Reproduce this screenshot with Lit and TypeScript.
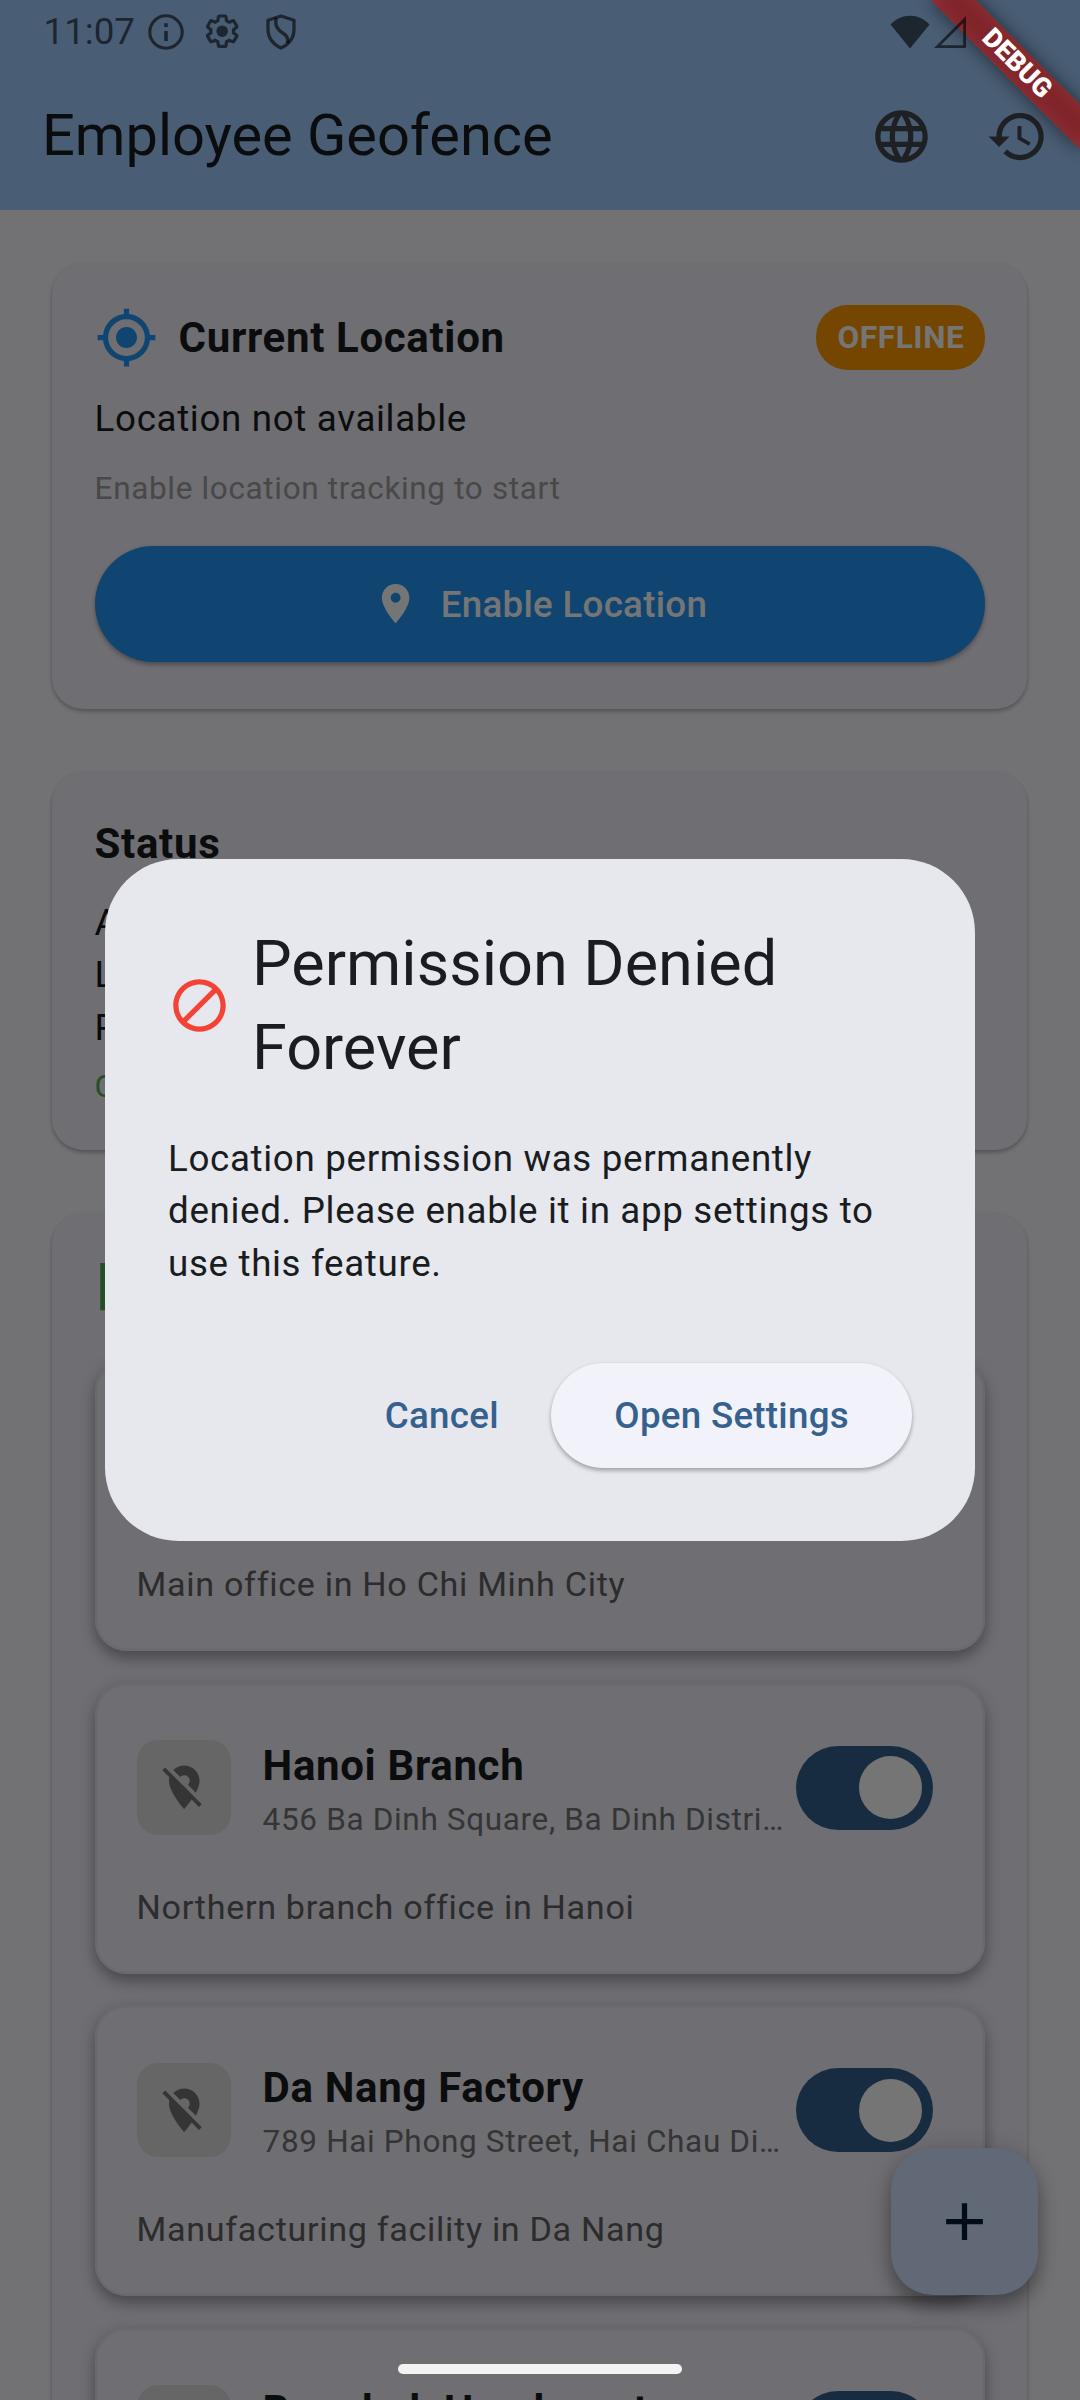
import { LitElement, html, css, svg } from "lit";
import { customElement, property } from "lit/decorators.js";

const ICONS = {
  globe:
    "M11.99 2C6.47 2 2 6.48 2 12s4.47 10 9.99 10C17.52 22 22 17.52 22 12S17.52 2 11.99 2zm6.93 6h-2.95c-.32-1.25-.78-2.45-1.38-3.56 1.84.63 3.37 1.91 4.33 3.56zM12 4.04c.83 1.2 1.48 2.53 1.91 3.96h-3.82c.43-1.43 1.08-2.76 1.91-3.96zM4.26 14C4.1 13.36 4 12.69 4 12s.1-1.36.26-2h3.38c-.08.66-.14 1.32-.14 2 0 .68.06 1.34.14 2H4.26zm.82 2h2.95c.32 1.25.78 2.45 1.38 3.56-1.84-.63-3.37-1.9-4.33-3.56zm2.95-8H5.08c.96-1.66 2.49-2.93 4.33-3.56C8.81 5.55 8.35 6.75 8.03 8zM12 19.96c-.83-1.2-1.48-2.53-1.91-3.96h3.82c-.43 1.43-1.08 2.76-1.91 3.96zM14.34 14H9.66c-.09-.66-.16-1.32-.16-2 0-.68.07-1.35.16-2h4.68c.09.65.16 1.32.16 2 0 .68-.07 1.34-.16 2zm.25 5.56c.6-1.11 1.06-2.31 1.38-3.56h2.95c-.96 1.65-2.49 2.93-4.33 3.56zM16.36 14c.08-.66.14-1.32.14-2 0-.68-.06-1.34-.14-2h3.38c.16.64.26 1.31.26 2s-.1 1.36-.26 2h-3.38z",
  history:
    "M13 3c-4.97 0-9 4.03-9 9H1l3.89 3.89.07.14L9 12H6c0-3.87 3.13-7 7-7s7 3.13 7 7-3.13 7-7 7c-1.93 0-3.68-.79-4.94-2.06l-1.42 1.42C8.27 19.99 10.51 21 13 21c4.97 0 9-4.03 9-9s-4.03-9-9-9zm-1 5v5l4.28 2.54.72-1.21-3.5-2.08V8H12z",
  locate:
    "M12 8c-2.21 0-4 1.79-4 4s1.79 4 4 4 4-1.79 4-4-1.79-4-4-4zm8.94 3c-.46-4.17-3.77-7.48-7.94-7.94V1h-2v2.06C6.83 3.52 3.52 6.83 3.06 11H1v2h2.06c.46 4.17 3.77 7.48 7.94 7.94V23h2v-2.06c4.17-.46 7.48-3.77 7.94-7.94H23v-2h-2.06zM12 19c-3.87 0-7-3.13-7-7s3.13-7 7-7 7 3.13 7 7-3.13 7-7 7z",
  pin: "M12 2C8.13 2 5 5.13 5 9c0 5.25 7 13 7 13s7-7.75 7-13c0-3.87-3.13-7-7-7zm0 9.5c-1.38 0-2.5-1.12-2.5-2.5s1.12-2.5 2.5-2.5 2.5 1.12 2.5 2.5-1.12 2.5-2.5 2.5z",
  pinOff:
    "M12 6.5c1.38 0 2.5 1.12 2.5 2.5 0 .74-.33 1.39-.83 1.85l3.63 3.63c.98-1.86 1.7-3.8 1.7-5.48 0-3.87-3.13-7-7-7-1.98 0-3.76.83-5.04 2.15l3.19 3.19c.46-.52 1.11-.84 1.85-.84zm4.37 9.6l-4.63-4.63-.11-.11L3.27 3 2 4.27l3.18 3.18C5.07 7.95 5 8.47 5 9c0 5.25 7 13 7 13s1.67-1.85 3.38-4.35L18.73 21 20 19.73l-3.63-3.63z",
  block:
    "M12 2C6.48 2 2 6.48 2 12s4.48 10 10 10 10-4.48 10-10S17.52 2 12 2zM4 12c0-4.42 3.58-8 8-8 1.85 0 3.55.63 4.9 1.69L5.69 16.9C4.63 15.55 4 13.85 4 12zm8 8c-1.85 0-3.55-.63-4.9-1.69L18.31 7.1C19.37 8.45 20 10.15 20 12c0 4.42-3.58 8-8 8z",
  business:
    "M12 7V3H2v18h20V7H12zM6 19H4v-2h2v2zm0-4H4v-2h2v2zm0-4H4V9h2v2zm0-4H4V5h2v2zm4 12H8v-2h2v2zm0-4H8v-2h2v2zm0-4H8V9h2v2zm0-4H8V5h2v2zm10 12h-8v-2h2v-2h-2v-2h2v-2h-2V9h8v10z",
  add: "M19 13h-6v6h-2v-6H5v-2h6V5h2v6h6v2z",
  gear: "M19.43 12.98c.04-.32.07-.64.07-.98s-.03-.66-.07-.98l2.11-1.65c.19-.15.24-.42.12-.64l-2-3.46c-.09-.16-.26-.25-.44-.25-.06 0-.12.01-.17.03l-2.49 1c-.52-.4-1.08-.73-1.69-.98l-.38-2.65C14.46 2.18 14.25 2 14 2h-4c-.25 0-.46.18-.49.42l-.38 2.65c-.61.25-1.17.59-1.69.98l-2.49-1c-.06-.02-.12-.03-.18-.03-.17 0-.34.09-.43.25l-2 3.46c-.13.22-.07.49.12.64l2.11 1.65c-.04.32-.07.65-.07.98s.03.66.07.98l-2.11 1.65c-.19.15-.24.42-.12.64l2 3.46c.09.16.26.25.44.25.06 0 .12-.01.17-.03l2.49-1c.52.4 1.08.73 1.69.98l.38 2.65c.03.24.24.42.49.42h4c.25 0 .46-.18.49-.42l.38-2.65c.61-.25 1.17-.59 1.69-.98l2.49 1c.06.02.12.03.18.03.17 0 .34-.09.43-.25l2-3.46c.12-.22.07-.49-.12-.64l-2.11-1.65z",
};

const icon = (name: keyof typeof ICONS, cls = "") =>
  html`<svg class="icon ${cls}" viewBox="0 0 24 24" aria-hidden="true">
    ${svg`<path d=${ICONS[name]}></path>`}
  </svg>`;

interface Office {
  name: string;
  address: string;
  description: string;
}

const OFFICES: Office[] = [
  {
    name: "Head Office",
    address: "123 Nguyen Hue Street, District 1, Ho Chi Minh City",
    description: "Main office in Ho Chi Minh City",
  },
  {
    name: "Hanoi Branch",
    address: "456 Ba Dinh Square, Ba Dinh District, Hanoi",
    description: "Northern branch office in Hanoi",
  },
  {
    name: "Da Nang Factory",
    address: "789 Hai Phong Street, Hai Chau District, Da Nang",
    description: "Manufacturing facility in Da Nang",
  },
  {
    name: "Bangkok Headquarters",
    address: "321 Sukhumvit Road, Watthana, Bangkok",
    description: "Regional office in Bangkok",
  },
];

@customElement("office-card")
export class OfficeCard extends LitElement {
  @property({ attribute: false }) office!: Office;

  static styles = css`
    :host {
      display: block;
      box-sizing: border-box;
      height: 291px;
      padding: 42px;
      border-radius: 31.5px;
      background: #f2effa;
      box-shadow: inset 0 0 0 2.4px #e4e6e9, 0 8px 14px rgba(0, 0, 0, 0.26),
        0 3px 18px rgba(0, 0, 0, 0.12);
    }
    .row {
      display: flex;
      align-items: center;
      height: 126px;
    }
    .tile {
      display: grid;
      place-items: center;
      flex: none;
      width: 94.5px;
      height: 94.5px;
      border-radius: 21px;
      background: #dedede;
    }
    .icon {
      display: block;
      width: 52.5px;
      height: 52.5px;
      fill: #757575;
    }
    .text {
      flex: 1;
      min-width: 0;
      margin-left: 31.5px;
    }
    .name {
      font-size: 42px;
      font-weight: 700;
      line-height: 63px;
      letter-spacing: 0.656px;
      white-space: nowrap;
    }
    .address {
      overflow: hidden;
      font-size: 31.5px;
      line-height: 45px;
      letter-spacing: 0.656px;
      color: #757575;
      white-space: nowrap;
      text-overflow: ellipsis;
    }
    .switch {
      display: flex;
      flex: none;
      justify-content: flex-end;
      box-sizing: border-box;
      width: 136.5px;
      height: 84px;
      margin: 0 10.5px;
      padding: 10.5px;
      border-radius: 42px;
      background: #36618e;
    }
    .thumb {
      width: 63px;
      height: 63px;
      border-radius: 50%;
      background: #fff;
    }
    .description {
      margin-top: 32px;
      font-size: 34.125px;
      line-height: 48.75px;
      letter-spacing: 0.69px;
      color: #616161;
    }
  `;

  render() {
    return html`
      <div class="row">
        <div class="tile">${icon("pinOff")}</div>
        <div class="text">
          <div class="name">${this.office.name}</div>
          <div class="address">${this.office.address}</div>
        </div>
        <div class="switch" role="switch" aria-checked="true"><div class="thumb"></div></div>
      </div>
      <div class="description">${this.office.description}</div>
    `;
  }
}

@customElement("app-root")
export class AppRoot extends LitElement {
  static styles = css`
    :host {
      display: block;
      position: relative;
      width: 1080px;
      height: 2400px;
      overflow: hidden;
      background: #f8f9fd;
      color: #191c20;
      font-family: Roboto, "Liberation Sans", sans-serif;
      font-size: 36.75px;
      line-height: 52.5px;
      letter-spacing: 0.656px;
    }
    .icon {
      display: block;
      flex: none;
      width: 63px;
      height: 63px;
      fill: currentColor;
    }
    .appbar {
      display: flex;
      align-items: center;
      box-sizing: border-box;
      height: 210px;
      padding: 63px 31px 0 42px;
      background: #a0cafd;
    }
    .title {
      flex: 1;
      margin: 0 0 2px;
      font-size: 57.75px;
      font-weight: 400;
      line-height: 73.5px;
      letter-spacing: 0;
    }
    .actions {
      display: flex;
      gap: 53px;
      color: #43474e;
    }
    .content {
      display: flex;
      flex-direction: column;
      gap: 62.5px;
      padding: 52.5px 53px 52.5px 52px;
    }
    .card {
      box-sizing: border-box;
      padding: 42px 42px 42px 42.6px;
      border-radius: 31.5px;
      background: #f2effa;
      box-shadow: 0 3px 4px rgba(0, 0, 0, 0.2), 0 1px 4px rgba(0, 0, 0, 0.1);
    }
    .location {
      height: 446.5px;
    }
    .status {
      height: 378.5px;
      padding-top: 40px;
    }
    .location-head {
      display: flex;
      align-items: center;
      gap: 21px;
      height: 65.5px;
      margin-bottom: 22.5px;
    }
    .blue {
      color: #2196f3;
    }
    .heading {
      flex: 1;
      margin: 0;
      font-size: 42px;
      font-weight: 700;
      line-height: 63px;
      letter-spacing: 0.656px;
    }
    .badge {
      padding: 10.25px 20.5px 10.25px 21px;
      border-radius: 31.5px;
      background: #ff9800;
      color: #fff;
      font-size: 31.5px;
      font-weight: 700;
      line-height: 45px;
    }
    .small {
      font-size: 31.5px;
      line-height: 45px;
    }
    .hint {
      margin-top: 20.5px;
      color: #9e9e9e;
    }
    .button {
      display: flex;
      align-items: center;
      justify-content: center;
      box-sizing: border-box;
      border-radius: 60px;
      font-weight: 500;
      letter-spacing: 0.2625px;
      box-shadow: 0 3px 4px rgba(0, 0, 0, 0.24), 0 1px 4px rgba(0, 0, 0, 0.1);
    }
    .enable {
      gap: 21px;
      height: 115.5px;
      margin-top: 35.5px;
      background: #2196f3;
      color: #fff;
    }
    .enable .icon {
      width: 47.25px;
      height: 47.25px;
    }
    .enable .label {
      padding-top: 2px;
    }
    .status .heading {
      margin-bottom: 22px;
    }
    .connected {
      margin-top: 10px;
      color: #4caf50;
    }
    .offices-head {
      display: flex;
      align-items: center;
      gap: 21px;
      margin-bottom: 42.5px;
    }
    .green {
      color: #4caf50;
    }
    .offices-list {
      display: flex;
      flex-direction: column;
      gap: 31.5px;
    }
    .fab {
      position: absolute;
      right: 42px;
      bottom: 105px;
      display: grid;
      place-items: center;
      width: 147px;
      height: 147px;
      border-radius: 42px;
      background: #d1e4ff;
      color: #001d36;
      box-shadow: 0 12px 18px rgba(0, 0, 0, 0.3), 0 2px 26px rgba(0, 0, 0, 0.16);
    }
    .scrim {
      position: absolute;
      inset: 0;
      display: flex;
      align-items: center;
      justify-content: center;
      background: rgba(0, 0, 0, 0.54);
    }
    .dialog {
      box-sizing: border-box;
      width: 870px;
      padding: 63px;
      border-radius: 73.5px;
      background: #e7e8ee;
    }
    .dialog-title {
      display: flex;
      align-items: center;
      gap: 21px;
      margin: 0 0 43px;
      font-size: 63px;
      font-weight: 400;
      line-height: 84px;
      letter-spacing: 0;
    }
    .dialog-title .icon {
      color: #f44336;
    }
    .dialog-actions {
      display: flex;
      align-items: center;
      justify-content: flex-end;
      gap: 21px;
      margin-top: 72.5px;
      margin-bottom: 10.5px;
      color: #36618e;
    }
    .cancel {
      padding: 1px 31.5px 0;
      box-shadow: none;
    }
    .open {
      height: 105px;
      padding: 1px 63px 0;
      background: #f2f3fa;
    }
    .banner {
      position: absolute;
      top: 73.5px;
      left: 975px;
      width: 210px;
      height: 31.5px;
      transform: rotate(45deg);
      transform-origin: 105px -73.5px;
      background: rgba(183, 28, 28, 0.627);
      color: #fff;
      font-size: 26.8px;
      font-weight: 900;
      line-height: 31.5px;
      letter-spacing: 0;
      text-align: center;
    }
    .banner-shadow {
      background: rgba(0, 0, 0, 0.5);
      filter: blur(9.6px);
    }
    .statusbar {
      position: absolute;
      top: 0;
      left: 0;
      right: 0;
      display: flex;
      align-items: center;
      height: 63px;
      padding: 0 113px 0 43.5px;
      color: rgba(0, 0, 0, 0.6);
    }
    .clock {
      margin-right: 12.5px;
      font-size: 36.75px;
      line-height: 42px;
      letter-spacing: 0;
    }
    .sys {
      display: block;
      flex: none;
      fill: none;
      stroke: currentColor;
    }
    .solid {
      fill: currentColor;
      stroke: none;
    }
    .spacer {
      flex: 1;
    }
    .gear {
      margin-left: 20.5px;
    }
    .shield {
      margin-left: 26px;
    }
    .signal {
      margin-left: 3px;
    }
    .pill {
      position: absolute;
      bottom: 26px;
      left: 398px;
      width: 284px;
      height: 10px;
      border-radius: 5px;
      background: #f3f3f3;
    }
  `;

  private renderStatusBar() {
    return html`
      <div class="statusbar">
        <span class="clock">11:07</span>
        <svg class="sys" width="36" height="36" viewBox="0 0 36 36" stroke-width="3.1">
          <circle cx="18" cy="18" r="16.2"></circle>
          <path d="M18 17v10M18 9.3v3.6" stroke-width="3.6"></path>
        </svg>
        <svg class="sys gear" width="36.4" height="36.4" viewBox="0 0 24 24" stroke-width="2.1">
          <path d=${ICONS.gear}></path>
          <circle class="solid" cx="12" cy="12" r="3.8"></circle>
        </svg>
        <svg class="sys shield" width="30" height="36" viewBox="0 0 30 36" stroke-width="3.3">
          <path d="M15 2 L28 6.3 V15.5 C28 24 22.5 31 15 34 C7.500 31 2 24 2 15.500 V6.300 Z" stroke-linejoin="round"></path>
          <path d="M10 4 C9.500 10 9.500 13 14 17 C19 21 23 22 21.500 29" stroke-width="3.4"></path>
        </svg>
        <span class="spacer"></span>
        <svg class="sys solid" width="40" height="34" viewBox="0 0 40 34">
          <path d="M20 33.500 L0.500 9.500 C11 -2.300 29 -2.300 39.500 9.500 Z"></path>
        </svg>
        <svg class="sys signal" width="34" height="34" viewBox="0 0 34 34" stroke-width="2.8">
          <path d="M31.600 4.500 V31.600 H4.500 Z"></path>
        </svg>
      </div>
    `;
  }

  private renderDialog() {
    return html`
      <div class="scrim">
        <section class="dialog" role="dialog">
          <h2 class="dialog-title">${icon("block")}<span>Permission Denied Forever</span></h2>
          <div>
            Location permission was permanently denied. Please enable it in app settings to use this
            feature.
          </div>
          <div class="dialog-actions">
            <div class="button cancel">Cancel</div>
            <div class="button open">Open Settings</div>
          </div>
        </section>
      </div>
    `;
  }

  render() {
    return html`
      <header class="appbar">
        <h1 class="title">Employee Geofence</h1>
        <div class="actions">${icon("globe")}${icon("history")}</div>
      </header>
      <main class="content">
        <section class="card location">
          <div class="location-head">
            ${icon("locate", "blue")}
            <h2 class="heading">Current Location</h2>
            <span class="badge">OFFLINE</span>
          </div>
          <div>Location not available</div>
          <div class="small hint">Enable location tracking to start</div>
          <div class="button enable">${icon("pin")}<span class="label">Enable Location</span></div>
        </section>
        <section class="card status">
          <h2 class="heading">Status</h2>
          <div>Active Geofences: 4</div>
          <div>Location: Unknown</div>
          <div>Permission: Denied</div>
          <div class="small connected">Connected</div>
        </section>
        <section class="card offices">
          <div class="offices-head">${icon("business", "green")}<h2 class="heading">Offices</h2></div>
          <div class="offices-list">
            ${OFFICES.map((o) => html`<office-card .office=${o}></office-card>`)}
          </div>
        </section>
      </main>
      <div class="fab">${icon("add")}</div>
      ${this.renderDialog()}
      <div class="banner banner-shadow"></div>
      <div class="banner">DEBUG</div>
      ${this.renderStatusBar()}
      <div class="pill"></div>
    `;
  }
}
